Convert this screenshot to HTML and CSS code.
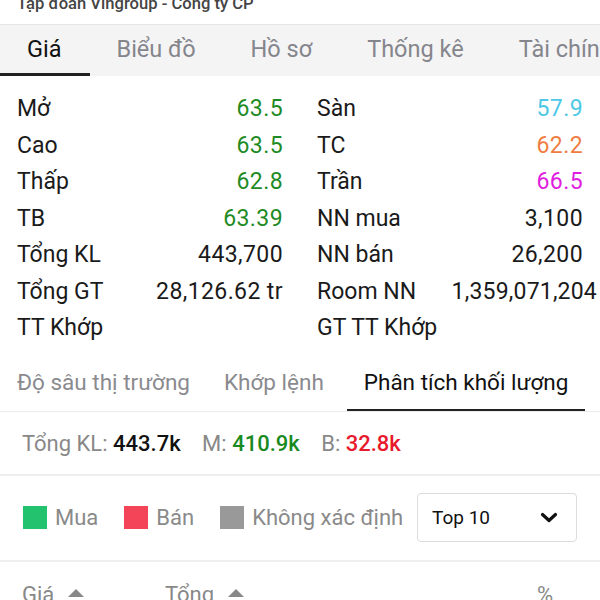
FILE: index.html
```html
<!DOCTYPE html>
<html lang="vi">
<head>
    <meta charset="UTF-8">
    <title>VIC - Giá</title>
    <link rel="stylesheet" href="styles.css">
</head>
<body>
    <div class="title"><span>Tập đoàn Vingroup - Công ty CP</span></div>

    <div class="tabs">
        <div class="tab active">Giá</div>
        <div class="tab">Biểu đồ</div>
        <div class="tab">Hồ sơ</div>
        <div class="tab">Thống kê</div>
        <div class="tab">Tài chính</div>
    </div>

    <div class="stats">
        <div class="row"><span>Mở</span><span class="up">63.5</span></div>
        <div class="row"><span>Sàn</span><span class="floor">57.9</span></div>
        <div class="row"><span>Cao</span><span class="up">63.5</span></div>
        <div class="row"><span>TC</span><span class="ref">62.2</span></div>
        <div class="row"><span>Thấp</span><span class="up">62.8</span></div>
        <div class="row"><span>Trần</span><span class="ceil">66.5</span></div>
        <div class="row"><span>TB</span><span class="up">63.39</span></div>
        <div class="row"><span>NN mua</span><span>3,100</span></div>
        <div class="row"><span>Tổng KL</span><span>443,700</span></div>
        <div class="row"><span>NN bán</span><span>26,200</span></div>
        <div class="row"><span>Tổng GT</span><span>28,126.62 tr</span></div>
        <div class="row"><span>Room NN</span><span class="wide">1,359,071,204</span></div>
        <div class="row"><span>TT Khớp</span><span></span></div>
        <div class="row"><span>GT TT Khớp</span><span></span></div>
    </div>

    <div class="subtabs">
        <div class="subtab">Độ sâu thị trường</div>
        <div class="subtab second">Khớp lệnh</div>
        <div class="subtab active">Phân tích khối lượng</div>
    </div>

    <div class="summary">
        <span class="key">Tổng KL:</span> <b>443.7k</b>
        <span class="key">M:</span> <b class="buy">410.9k</b>
        <span class="key">B:</span> <b class="sell">32.8k</b>
    </div>

    <div class="legend">
        <span class="dot green"></span><span class="lbl">Mua</span>
        <span class="dot red"></span><span class="lbl">Bán</span>
        <span class="dot grey"></span><span class="lbl last">Không xác định</span>
        <div class="select">
            <span>Top 10</span>
            <svg width="18" height="12" viewBox="0 0 18 12"><path d="M2.5 2.5 L9 8.5 L15.5 2.5" fill="none" stroke="#111" stroke-width="3.2" stroke-linecap="round" stroke-linejoin="round"/></svg>
        </div>
    </div>

    <div class="thead">
        <div class="th col-price">Giá <span class="tri"></span></div>
        <div class="th col-total">Tổng <span class="tri"></span></div>
        <div class="th col-pct">%</div>
    </div>
</body>
</html>
```

FILE: styles.css
```css
body {
    margin: 0;
    font-family: Roboto, "Noto Sans", sans-serif;
    background: #fff;
    color: #111;
    overflow: hidden;
}
.title {
    height: 24px;
    overflow: hidden;
    padding-left: 17px;
    font-size: 16.6px;
    font-weight: 500;
    color: #444;
}
.title span {
    display: block;
    line-height: 20px;
    margin-top: -6px;
}
.tabs {
    display: flex;
    height: 52px;
    background: #f4f4f5;
    border-top: 1px solid #e4e4e4;
    box-sizing: border-box;
    white-space: nowrap;
    overflow: hidden;
}
.tab {
    padding: 0 28px 0 27px;
    font-size: 23.5px;
    color: #85858c;
    line-height: 48px;
    border-bottom: 3px solid transparent;
}
.tab.active {
    color: #111;
    border-bottom-color: #222;
}
.stats {
    display: grid;
    grid-template-columns: 266px 266px;
    column-gap: 34px;
    padding: 15px 17px 0;
}
.row {
    display: flex;
    justify-content: space-between;
    height: 36.5px;
    line-height: 36px;
    font-size: 23px;
    color: #1a1a1a;
    white-space: nowrap;
}
.row span + span {
    letter-spacing: 0.4px;
}
.row .wide {
    margin-right: -14px;
    letter-spacing: 0.2px;
}
.up { color: #1f8b25; }
.floor { color: #4dc8e6; }
.ref { color: #ef7d42; }
.ceil { color: #e01ee0; }
.subtabs {
    display: flex;
    margin-top: 9px;
    height: 56px;
    border-bottom: 1px solid #ececec;
    box-sizing: border-box;
    white-space: nowrap;
}
.subtab {
    padding: 0 17px;
    font-size: 22.5px;
    line-height: 53px;
    color: #8a8a8f;
    border-bottom: 2px solid transparent;
}
.subtab.second {
    padding-right: 23px;
}
.subtab.active {
    color: #111;
    border-bottom-color: #222;
}
.summary {
    height: 64px;
    line-height: 64px;
    padding-left: 22px;
    font-size: 22px;
    border-bottom: 2px solid #efefef;
    box-sizing: border-box;
    white-space: nowrap;
}
.summary .key { color: #888; }
.summary b { font-weight: 500; color: #111; margin-right: 16px; }
.summary .buy { color: #1a8a1f; }
.summary .sell { color: #e8192c; }
.legend {
    display: flex;
    align-items: center;
    height: 86px;
    padding-left: 23px;
    border-bottom: 2px solid #efefef;
    box-sizing: border-box;
    white-space: nowrap;
}
.dot {
    flex-shrink: 0;
    width: 24px;
    height: 23px;
    margin-right: 8px;
}
.green { background: #23c26f; }
.red { background: #f44457; }
.grey { background: #999; }
.lbl {
    font-size: 22px;
    color: #8a8a8a;
    margin-right: 26px;
}
.lbl.last {
    margin-right: 0;
}
.select {
    flex-shrink: 0;
    margin-left: auto;
    margin-right: 23px;
    width: 160px;
    height: 49px;
    border: 1px solid #dcdcdc;
    border-radius: 4px;
    box-sizing: border-box;
    display: flex;
    align-items: center;
    justify-content: space-between;
    padding: 0 18px 0 14px;
    font-size: 19px;
    color: #111;
}
.thead {
    display: flex;
    padding-top: 20px;
    font-size: 22px;
    color: #888;
}
.col-price { padding-left: 22px; width: 143px; }
.col-total { width: 372px; }
.tri {
    display: inline-block;
    width: 0;
    height: 0;
    margin-left: 8px;
    border-left: 8px solid transparent;
    border-right: 8px solid transparent;
    border-bottom: 8px solid #888;
    vertical-align: 5px;
}
```
